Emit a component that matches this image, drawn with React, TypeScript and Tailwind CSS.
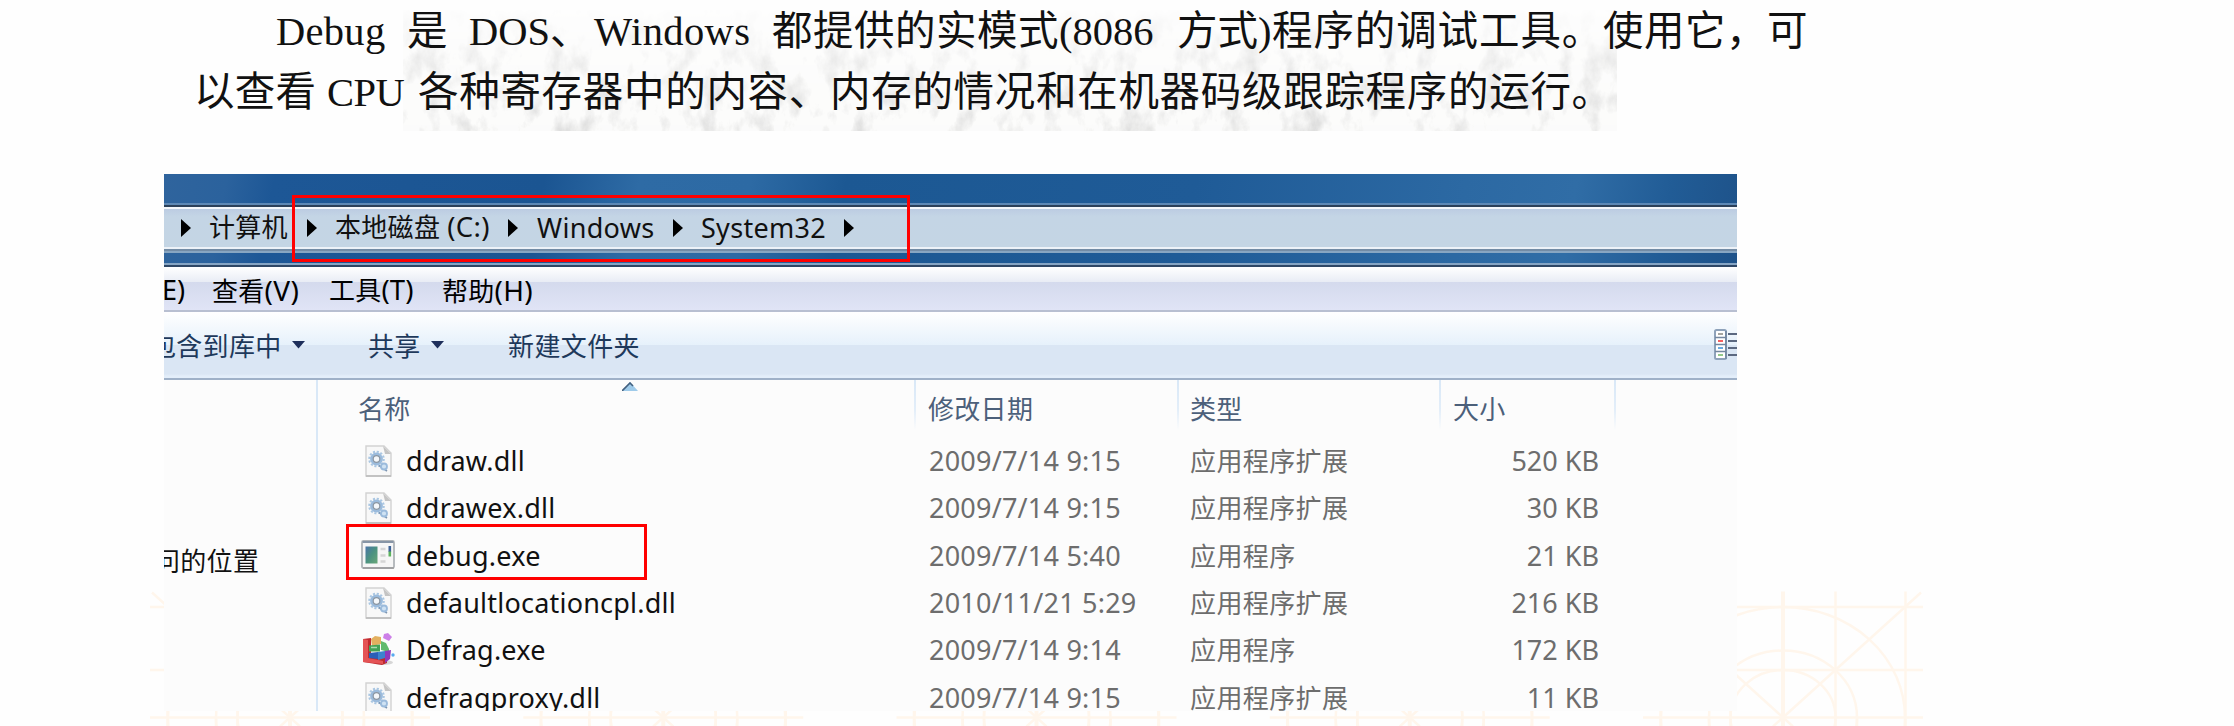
import React from "react";

type IconKind = "dll" | "window" | "defrag";

const files: { name: string; date: string; type: string; size: string; icon: IconKind }[] = [
  { name: "ddraw.dll", date: "2009/7/14 9:15", type: "应用程序扩展", size: "520 KB", icon: "dll" },
  { name: "ddrawex.dll", date: "2009/7/14 9:15", type: "应用程序扩展", size: "30 KB", icon: "dll" },
  { name: "debug.exe", date: "2009/7/14 5:40", type: "应用程序", size: "21 KB", icon: "window" },
  { name: "defaultlocationcpl.dll", date: "2010/11/21 5:29", type: "应用程序扩展", size: "216 KB", icon: "dll" },
  { name: "Defrag.exe", date: "2009/7/14 9:14", type: "应用程序", size: "172 KB", icon: "defrag" },
  { name: "defragproxy.dll", date: "2009/7/14 9:15", type: "应用程序扩展", size: "11 KB", icon: "dll" },
];

function DllIcon() {
  return (
    <svg width="34" height="34" viewBox="0 0 34 34">
      <path d="M5 2h18l7 7v23H5z" fill="#f8f8f8" stroke="#d2d2d2" strokeWidth="1.4" />
      <path d="M5 32h25" stroke="#bcbcbc" strokeWidth="1.6" />
      <path d="M22 2l8 8h-6z" fill="#c4c4c4" />
      <circle cx="15.500" cy="15" r="7.300" fill="none" stroke="#a9c6e2" strokeWidth="2" strokeDasharray="2.100 1.722" />
      <circle cx="15.500" cy="15" r="5" fill="#f4f7fa" stroke="#9bbbdc" strokeWidth="2.800" />
      <circle cx="15.500" cy="15" r="3.300" fill="#f4f7fa" stroke="#8a96a3" strokeWidth="1.200" />
      <path d="M18 21.500l8 5.500" stroke="#7e95b0" strokeWidth="1.600" />
      <circle cx="23" cy="22.500" r="3" fill="#cfe2f3" stroke="#9bbbdc" strokeWidth="1.800" />
    </svg>
  );
}

function WindowIcon() {
  return (
    <svg width="34" height="34" viewBox="0 0 34 34">
      <defs>
        <linearGradient id="screen" x1="0" y1="0" x2="1" y2="1">
          <stop offset="0" stopColor="#4a73a8" />
          <stop offset=".5" stopColor="#4b9280" />
          <stop offset="1" stopColor="#6aa878" />
        </linearGradient>
      </defs>
      <rect x="1" y="2" width="32" height="27" rx="1.500" fill="#f6f6f6" stroke="#b0b4b8" strokeWidth="1.8" />
      <path d="M1.500 3h31" stroke="#8795a6" strokeWidth="2" />
      <path d="M2 29h31" stroke="#9a9a9a" strokeWidth="1.400" />
      <rect x="4.500" y="7.500" width="12" height="17" fill="url(#screen)" />
      <path d="M19.500 10h5M19.500 16.500h5M19.500 22.500h5" stroke="#d5d5d5" strokeWidth="2.400" />
      <path d="M28.800 7v6" stroke="#3d6398" strokeWidth="2.600" />
      <path d="M28.800 12.500v5" stroke="#5bb25c" strokeWidth="2.600" />
    </svg>
  );
}

function DefragIcon() {
  return (
    <svg width="34" height="34" viewBox="0 0 34 34">
      <ellipse cx="22" cy="29.500" rx="10" ry="2.500" fill="#d6d6d6" />
      <path d="M2 6l8-1v17l12 2 4-2v8l-5 2-19-3z" fill="#bf2a2e" />
      <path d="M2 6l5 1v18l15 3v3L2 29z" fill="#e45355" />
      <path d="M10 6l4-3 6 1v7l-9 2z" fill="#e3b05f" />
      <path d="M8 12.500l11-1v7H8z" fill="#44a256" />
      <path d="M10 14.500h6" stroke="#a8dcae" strokeWidth="1.500" />
      <path d="M20 8l5 2 3 6v3l-8-2z" fill="#62ba6e" />
      <path d="M8 20l9-1v7l-9-1z" fill="#2b5fb8" />
      <path d="M17 19l7-1v7l-7 2z" fill="#3c83cf" />
      <path d="M24 18l6-1-1 9-5 4z" fill="#9038bb" />
      <path d="M23 1l4-1 4 4-3 4-6-3z" fill="#cd80e8" />
      <circle cx="32" cy="22" r="1.700" fill="#58abef" />
    </svg>
  );
}

const icons: Record<IconKind, () => React.ReactElement> = { dll: DllIcon, window: WindowIcon, defrag: DefragIcon };

function Crumb() {
  return (
    <svg width="10" height="18" viewBox="0 0 10 18" className="shrink-0">
      <path d="M0 0l10 9-10 9z" fill="#000" />
    </svg>
  );
}

function Caret() {
  return (
    <svg width="13" height="8" viewBox="0 0 13 8" className="shrink-0">
      <path d="M0 0h13L6.500 7.500z" fill="#1e2f5b" />
    </svg>
  );
}

function Ornament() {
  return (
    <svg width="2234" height="140" viewBox="0 586 2234 140" className="absolute left-0 top-[586px]">
      <g fill="none" stroke="#fff6ec" strokeWidth="2.500">
        {[290, 663.25, 1036.5, 1409.75, 1783].map((x) => (
          <g key={x} transform={`translate(${x} 717.5)`}>
            <path d="M-140 0H140M-140-47.500H140M-140-110.500H140" />
            <path d="M-122.500-126V9M-74 0V9M-52.500-126V9M52.500-126V9M74 0V9M122.500-126V9" />
            <path d="M0-126V9" strokeWidth="4" />
            <path d="M138-125L-10 9M-138-125L10 9" />
            <ellipse rx="52.500" ry="47.500" />
            <ellipse rx="74" ry="67" />
            <ellipse rx="122" ry="110.500" />
          </g>
        ))}
      </g>
    </svg>
  );
}

function PaperGrain() {
  return (
    <svg width="1214" height="121" className="absolute left-[403px] top-[10px]">
      <defs>
        <filter id="grain" x="0" y="0" width="100%" height="100%">
          <feTurbulence type="fractalNoise" baseFrequency="0.05 0.03" numOctaves="5" seed="11" />
          <feColorMatrix values="0 0 0 0 .45  0 0 0 0 .45  0 0 0 0 .45  1.2 0 0 0 -.58" />
        </filter>
        <linearGradient id="fade" x1="0" y1="0" x2="0" y2="1">
          <stop offset="0" stopColor="#fff" stopOpacity=".05" />
          <stop offset=".4" stopColor="#fff" stopOpacity=".6" />
          <stop offset="1" stopColor="#fff" stopOpacity=".9" />
        </linearGradient>
        <mask id="grainMask">
          <rect width="1214" height="121" fill="url(#fade)" />
        </mask>
      </defs>
      <g mask="url(#grainMask)">
        <rect width="1214" height="121" fill="#fbfbfa" />
        <rect width="1214" height="121" filter="url(#grain)" />
      </g>
    </svg>
  );
}

function Intro() {
  return (
    <div className="relative h-[174px] whitespace-nowrap pt-[2px] font-['Liberation_Serif','Noto_Sans_CJK_SC',serif] text-[40.5px] leading-[60px] text-[#111]">
      <PaperGrain />
      <div className="relative flex h-[61px] pl-[276px]">
        <span className="w-[131px] tracking-[.3px]">Debug</span>
        <span className="w-[62px]">是</span>
        <span className="w-[125px]">DOS、</span>
        <span className="w-[178px] tracking-[.4px]">Windows</span>
        <span className="w-[287px] tracking-[.5px]">都提供的实模式</span>
        <span className="w-[118px]">(8086</span>
        <span className="w-[95px]">方式)</span>
        <span className="w-[331px] tracking-[.9px]">程序的调试工具。</span>
        <span className="tracking-[.5px]">使用它，可</span>
      </div>
      <div className="relative flex pl-[194px]">
        <span className="w-[133px] tracking-[.3px]">以查看</span>
        <span className="w-[91px] tracking-[-.5px]">CPU</span>
        <span className="tracking-[.7px]">各种寄存器中的内容、内存的情况和在机器码级跟踪程序的运行。</span>
      </div>
    </div>
  );
}

function AddressBar() {
  return (
    <div className="h-[93px] shrink-0 bg-[linear-gradient(100deg,#2f649d_0%,#2b629d_4%,#1d5796_7%,#1b5592_24%,#2e6ba5_30%,#2d6aa4_37%,#1c5893_43%,#1f5b97_65%,#2c69a3_82%,#306da6_89%,#215c96_95%,#1e5289_100%)]">
      <div className="h-[29px]" />
      <div className="h-[2px] bg-[#5d88b5]" />
      <div className="h-[2px] bg-[#2b4059]" />
      <div className="h-[2px] bg-[#f3f6fa]" />
      <div className="flex h-[38px] items-center bg-[linear-gradient(180deg,#bccce2_0%,#c4d5e5_20%,#c4d5e4_100%)] pl-[17px] text-[#111]">
        <Crumb />
        <span className="ml-[18px] w-[98px] pb-[2px] tracking-[.3px]">计算机</span>
        <Crumb />
        <span className="ml-[18px] w-[173px] pb-[2px] tracking-[.3px]">本地磁盘 <span className="text-[27.5px]">(C:)</span></span>
        <Crumb />
        <span className="ml-[19px] w-[136px] pb-px text-[27px] tracking-[.3px]">Windows</span>
        <Crumb />
        <span className="ml-[18px] w-[143px] pb-px text-[27px] tracking-[.3px]">System32</span>
        <Crumb />
      </div>
      <div className="h-[2px] bg-[#edf2f8]" />
      <div className="h-[2px] bg-[#728ba5]" />
      <div className="h-[2px] bg-[#88a6c2]" />
      <div className="h-[10px]" />
      <div className="h-[2px] bg-[#86a5c4]" />
      <div className="h-[2px] bg-[#2e4766]" />
    </div>
  );
}

function MenuBar() {
  return (
    <div className="flex h-[45px] shrink-0 items-center border-b-2 border-[#b8bfd1] bg-[linear-gradient(180deg,#fff_0px,#e8ecf5_15px,#d4daed_15px,#e0e4f6_43px)] pt-[3px] text-[26px] text-[#000]">
      <span className="ml-[-2px] w-[50px] text-[27px]">E)</span>
      <span className="w-[117px] tracking-[.3px]">查看<span className="text-[28px]">(V)</span></span>
      <span className="w-[113px] tracking-[.2px]">工具<span className="text-[27.5px]">(T)</span></span>
      <span className="tracking-[.3px]">帮助<span className="text-[28px]">(H)</span></span>
    </div>
  );
}

function ToolBar() {
  return (
    <div className="flex h-[68px] shrink-0 items-center border-b-2 border-[#9fb1c8] bg-[linear-gradient(180deg,#fff_0px,#e6f1fb_33px,#dae6f4_33px,#dae6f4_62px,#e3eefa_64px)] text-[#1e395b]">
      <span className="ml-[-14px] w-[142px] pt-[2px] tracking-[.3px]">包含到库中</span>
      <Caret />
      <span className="ml-[63px] w-[63px] pt-[2px] tracking-[.3px]">共享</span>
      <Caret />
      <span className="ml-[64px] pt-[2px] tracking-[.4px]">新建文件夹</span>
      <svg width="23" height="32" viewBox="0 0 23 32" className="ml-auto shrink-0">
        <rect x="1" y="1" width="11" height="29" rx="1.500" fill="#fff" stroke="#8ea2ba" strokeWidth="2" />
        <path d="M1 8.500h11M1 15.500h11M1 22.500h11M12 2v28" stroke="#7387a0" strokeWidth="1.500" />
        <path d="M4 5h5" stroke="#a5a5a0" strokeWidth="2" />
        <path d="M4 12h5" stroke="#f56060" strokeWidth="2" />
        <path d="M4 19h5" stroke="#6aabdf" strokeWidth="2" />
        <path d="M4 26h5" stroke="#94c98a" strokeWidth="2" />
        <path d="M14 5h9M14 12h9M14 19h9M14 26h9" stroke="#5b6880" strokeWidth="2" />
      </svg>
    </div>
  );
}

function Divider() {
  return <div className="h-[50px] w-[2px] bg-[linear-gradient(180deg,#d9e8f7,#e3eef9_60%,#fcfcfc)]" />;
}

function FileList() {
  return (
    <div className="flex-1">
      <div className="relative flex h-[58px] tracking-[.3px] text-[#4c607a]">
        <span className="w-[596px] pl-[40px] leading-[58px]">名称</span>
        <Divider />
        <span className="w-[261px] pl-[12px] leading-[58px]">修改日期</span>
        <Divider />
        <span className="w-[260px] pl-[11px] leading-[58px]">类型</span>
        <Divider />
        <span className="w-[173px] pl-[12px] leading-[58px]">大小</span>
        <Divider />
        <svg width="16" height="9" viewBox="0 0 16 9" className="absolute left-[304px] top-[2px]">
          <path d="M8 0l8 9H0z" fill="#9fcbea" />
          <path d="M0 9l8-8 3 3" fill="none" stroke="#42607f" strokeWidth="1.600" />
        </svg>
      </div>
      {files.map((file) => {
        const Icon = icons[file.icon];
        return (
          <div key={file.name} className="flex h-[47.3px] items-center text-[#6d6d6d]">
            <div className="ml-[43px] w-[45px] pb-px"><Icon /></div>
            <span className="w-[523px] pb-px text-[27px] tracking-[.22px] text-[#111]">{file.name}</span>
            <span className="w-[261px] pb-px text-[27px] tracking-[.22px]">{file.date}</span>
            <span className="w-[250px] pb-px tracking-[.4px]">{file.type}</span>
            <span className="w-[159px] pb-px text-right text-[27px]">{file.size}</span>
          </div>
        );
      })}
    </div>
  );
}

export default function App() {
  return (
    <div className="relative h-[726px] w-[2234px] overflow-hidden bg-[#fefefe]">
      <Ornament />
      <Intro />
      <div className="relative ml-[164px] flex h-[537px] w-[1573px] flex-col overflow-hidden whitespace-nowrap bg-[#fcfcfc] font-['Noto_Sans','Noto_Sans_CJK_SC',sans-serif] text-[26px] leading-[36px]">
        <AddressBar />
        <MenuBar />
        <ToolBar />
        <div className="flex flex-1">
          <div className="w-[154px] shrink-0 border-r-2 border-[#d9e8f7] pt-[163px] text-[#111]">
            <span className="ml-[-10px] tracking-[.3px]">问的位置</span>
          </div>
          <FileList />
        </div>
        <div className="absolute left-[128px] top-[21px] h-[67px] w-[618px] border-[3px] border-[#f00]" />
        <div className="absolute left-[182px] top-[350px] h-[56px] w-[301px] border-[3px] border-[#f00]" />
      </div>
    </div>
  );
}
